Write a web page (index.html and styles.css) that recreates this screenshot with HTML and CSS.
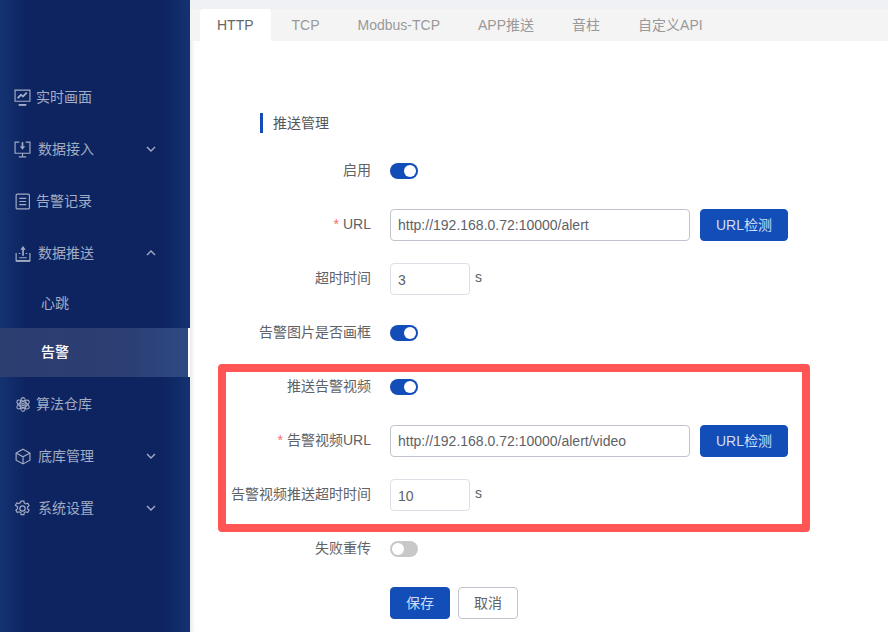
FILE: index.html
```html
<!DOCTYPE html>
<html lang="zh-CN">
<head>
<meta charset="utf-8">
<title>推送管理</title>
<link rel="stylesheet" href="styles.css">
</head>
<body>
<div class="app">
  <aside class="sidebar">
    <nav class="menu">
      <a class="item"><svg class="icon" viewBox="0 0 16 16"><path d="M1 1h14v10.500H1zM4.500 15h7M3.500 8.500l3-3 2 1.500 3.500-3.500"/><path class="bold" d="M3.500 8.500l3-3 2 1.500 3.500-3.500M4.500 15h7"/></svg><span class="lbl">实时画面</span></a>
      <a class="item wide"><svg class="icon" viewBox="0 0 16 16"><path d="M5 1H1v10.500h14V1h-4M4.500 15h7M8 11.500V15"/><path class="bold" d="M8 1v4"/><path class="solid" d="M5.500 5h5L8 8.200z"/></svg><span class="lbl">数据接入</span><svg class="chev" viewBox="0 0 10 6"><path d="M1 1l4 4 4-4"/></svg></a>
      <a class="item"><svg class="icon" viewBox="0 0 16 16"><rect x="2" y="1" width="12.500" height="14" rx="1"/><path d="M5 5h6.500M5 8h6.500M5 11h6.500"/></svg><span class="lbl">告警记录</span></a>
      <a class="item wide"><svg class="icon" viewBox="0 0 16 16"><path d="M2 7.500V15h13V7.500M11 8h1.500M4.500 8H6M5 12h7"/><path class="bold" d="M8.500 10V4M2 15h13"/><path class="solid" d="M8.500 1L6 4.500h5z"/></svg><span class="lbl">数据推送</span><svg class="chev" viewBox="0 0 10 6"><path d="M1 5l4-4 4 4"/></svg></a>
      <a class="sub">心跳</a>
      <a class="sub active">告警</a>
      <a class="item after"><svg class="icon" viewBox="0 0 16 16"><circle cx="8.500" cy="8" r="1.200"/><ellipse cx="8.500" cy="8" rx="6.500" ry="2.800" transform="rotate(30 8.500 8)"/><ellipse cx="8.500" cy="8" rx="6.500" ry="2.800" transform="rotate(-30 8.500 8)"/><ellipse cx="8.500" cy="8" rx="6.500" ry="2.800" transform="rotate(90 8.500 8)"/></svg><span class="lbl">算法仓库</span></a>
      <a class="item wide"><svg class="icon" viewBox="0 0 16 16"><path d="M8.500 1.200L15 4.700v6.800l-6.500 3.500L2 11.500V4.700zM2 4.700L8.500 8.200 15 4.700M8.500 8.200V15"/></svg><span class="lbl">底库管理</span><svg class="chev" viewBox="0 0 10 6"><path d="M1 1l4 4 4-4"/></svg></a>
      <a class="item wide"><svg class="icon" viewBox="0 0 16 16"><circle cx="8" cy="8" r="2.500"/><path d="M6.700 1h2.600l.4 2 1.300.7 1.900-.7 1.300 2.300-1.500 1.300v1.600l1.500 1.300-1.300 2.300-1.900-.7-1.300.7-.4 2H6.700l-.4-2-1.300-.7-1.900.7-1.300-2.300 1.500-1.300V6.300L1.300 5l1.300-2.300 1.900.7 1.300-.7z"/></svg><span class="lbl">系统设置</span><svg class="chev" viewBox="0 0 10 6"><path d="M1 1l4 4 4-4"/></svg></a>
    </nav>
  </aside>
  <main class="main">
    <div class="tabs">
      <span class="tab on">HTTP</span>
      <span class="tab">TCP</span>
      <span class="tab">Modbus-TCP</span>
      <span class="tab">APP推送</span>
      <span class="tab">音柱</span>
      <span class="tab">自定义API</span>
    </div>
    <section class="panel">
      <h2 class="title">推送管理</h2>
      <form class="form">
        <div class="row"><label class="label">启用</label><span class="switch on"></span></div>
        <div class="row"><label class="label"><i class="req">*</i>URL</label><input class="input url" value="http://192.168.0.72:10000/alert"><button type="button" class="btn primary check">URL检测</button></div>
        <div class="row"><label class="label">超时时间</label><input class="input num" value="3"><span class="unit">s</span></div>
        <div class="row"><label class="label">告警图片是否画框</label><span class="switch on"></span></div>
        <div class="row"><label class="label">推送告警视频</label><span class="switch on"></span></div>
        <div class="row"><label class="label"><i class="req">*</i>告警视频URL</label><input class="input url" value="http://192.168.0.72:10000/alert/video"><button type="button" class="btn primary check">URL检测</button></div>
        <div class="row"><label class="label">告警视频推送超时时间</label><input class="input num" value="10"><span class="unit">s</span></div>
        <div class="row"><label class="label">失败重传</label><span class="switch"></span></div>
        <div class="row"><span class="label"></span><button type="button" class="btn primary act">保存</button><button type="button" class="btn plain act">取消</button></div>
      </form>
      <div class="highlight"></div>
    </section>
  </main>
</div>
</body>
</html>
```
FILE: styles.css
```css
* { box-sizing: border-box; }
html, body { margin: 0; height: 100%; overflow: hidden; }
body { font: 14px/1.4 "Liberation Sans", "Noto Sans CJK SC", sans-serif; color: #606266; background: #fff; }
.app { display: flex; height: 632px; }
.sidebar {
  width: 190px; flex: none;
  background: linear-gradient(90deg, #143272 0%, #0d2460 14%, #0d2460 86%, #143272 100%);
  padding-top: 71px;
}
.menu { display: flex; flex-direction: column; }
.item {
  height: 52px; display: flex; align-items: center; padding: 2px 0 0 14px; color: #a3acc4; position: relative;
}
.item.after { margin-top: 1px; }
.icon { width: 17px; height: 17px; fill: none; stroke: #a3acc4; stroke-width: 1.100; flex: none; margin-top: -2px; }
.icon .bold { stroke-width: 1.600; }
.icon .solid { fill: #a3acc4; stroke: none; }
.lbl { margin-left: 5px; }
.wide .lbl { margin-left: 7px; }
.chev { width: 10px; height: 6px; fill: none; stroke: #a3acc4; stroke-width: 1.400; position: absolute; left: 146px; top: 23px; }
.sub { height: 49px; display: flex; align-items: center; padding-left: 41px; color: #a3acc4; }
.sub.active { color: #fff; font-weight: 500; background: linear-gradient(90deg, #2c3d70, #2b3f74 70%, #2e4a84); border-right: 2px solid #fff; }
.main { flex: 1; display: flex; flex-direction: column; min-width: 0; background: #fff; box-shadow: inset 5px 0 4px -3px rgba(0,0,0,.1); }
.tabs { display: flex; gap: 4px; padding: 9px 0 0 10px; height: 41px; flex: none; background: linear-gradient(#eff1f4 9px, #f4f4f5 9px); }
.tab { height: 32px; line-height: 32px; padding: 0 17px; color: #999; }
.tab.on { background: #fff; color: #666; border-radius: 4px 4px 0 0; }
.panel { position: relative; flex: 1; padding: 72px 0 0 70px; }
.title { margin: 0; height: 20px; line-height: 21px; padding-left: 10px; font-size: 14px; font-weight: 400; color: #555; border-left: 3px solid #134db8; }
.form { margin-top: 22px; display: flex; flex-direction: column; gap: 22px; margin-left: -70px; }
.row { display: flex; align-items: center; height: 32px; }
.label { width: 181px; text-align: right; margin-right: 19px; flex: none; color: #606266; }
.req { color: #f56c6c; font-style: normal; margin-right: 4px; }
.switch { width: 28px; height: 16px; border-radius: 8px; background: #c8c8c8; position: relative; }
.switch::after { content: ""; position: absolute; top: 2px; left: 2px; width: 12px; height: 12px; border-radius: 50%; background: #fff; }
.switch.on { background: #134db8; }
.switch.on::after { left: 14px; }
.input { height: 32px; border: 1px solid #c0c4cc; border-radius: 4px; padding: 0 7px; font: inherit; color: #606266; outline: none; }
.url { width: 300px; }
.num { width: 80px; border-color: #dcdfe6; padding-top: 2px; }
.unit { margin-left: 5px; margin-top: -3px; }
.btn { height: 32px; border-radius: 4px; font: inherit; padding: 1px 0 0; cursor: pointer; }
.primary { background: #134db8; color: #d0ddf4; border: 1px solid #134db8; }
.plain { background: #fff; color: #606266; border: 1px solid #c0c4cc; margin-left: 8px; }
.check { width: 88px; margin-left: 10px; }
.act { width: 60px; }
.highlight { position: absolute; left: 28px; top: 323px; width: 592px; height: 168px; border: 8px solid #ff5555; border-radius: 4px; pointer-events: none; }
```
